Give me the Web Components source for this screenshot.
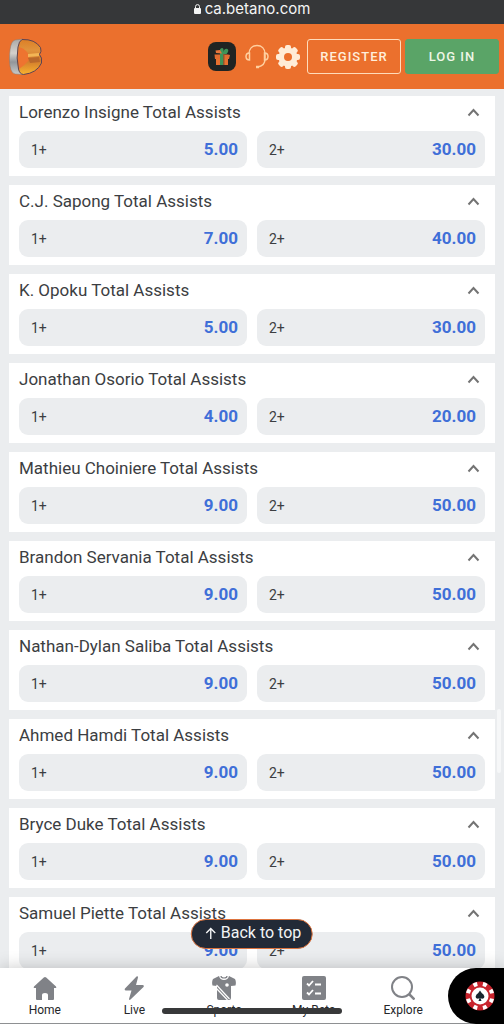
<!DOCTYPE html>
<html lang="en">
<head>
<meta charset="utf-8">
<meta name="viewport" content="width=device-width, initial-scale=1">
<title>Betano – Total Assists</title>
<style>
  html, body { margin: 0; height: 100%; }
  body { font-family: Roboto, "Liberation Sans", sans-serif; color: #3c3e42; background: #ebedef; }
</style>
</head>
<body>
<bet-app></bet-app>

<template id="t-app">
  <style>
    :host { display: flex; flex-direction: column; height: 100vh; position: relative; overflow: hidden; background: #ebedef; }
    main { flex: 1; min-height: 0; overflow-y: auto; scrollbar-width: none; display: flex; flex-direction: column; gap: 9px; padding: 7px 9px 0; }
    market-card { flex: none; }
    .thumb { position: absolute; right: 3px; top: 709px; width: 4px; height: 64px; border-radius: 2px; background: #f6f7f8; }
    .indicator { position: absolute; left: 50%; bottom: 10px; width: 180px; height: 6px; margin-left: -90px; border-radius: 3px; background: #38393a; }
  </style>
  <address-bar>ca.betano.com</address-bar>
  <site-header></site-header>
  <main></main>
  <div class="thumb"></div>
  <back-to-top>Back to top</back-to-top>
  <tab-bar></tab-bar>
  <div class="indicator"></div>
</template>

<template id="t-address">
  <style>
    :host { display: flex; justify-content: center; align-items: center; gap: 4px; height: 18px; padding-bottom: 6px; background: #363739; color: #f4f4f4; font: 15px/18px Inter, "Liberation Sans", sans-serif; }
    svg { width: 7px; height: 10px; }
  </style>
  <svg viewBox="0 0 7 10" aria-hidden="true"><rect y="4" width="7" height="6" rx="1" fill="#f4f4f4"/><path d="M1.500 4.500V2.600a2 2 0 0 1 4 0v1.900" fill="none" stroke="#f4f4f4"/></svg>
  <span><slot></slot></span>
</template>

<template id="t-header">
  <style>
    :host { display: flex; align-items: center; height: 65px; padding: 0 5px 0 9px; background: #eb702d; }
    a { display: block; margin-right: auto; }
    svg { display: block; }
    button { font: 500 13px/20px Roboto, sans-serif; letter-spacing: 1px; color: #ffeeda; border-radius: 3px; padding: 0; margin: 0; height: 35px; width: 94px; background: none; border: 1px solid #ffdcba; }
    .login { background: #5aa467; border-color: #5aa467; margin-left: 4px; color: #eef6e6; }
    .icon { border: 0; width: auto; height: auto; }
    .gift { margin-right: 9px; }
    .help { margin-right: 7px; }
    .gear { margin-right: 7px; }
  </style>
  <a href="#" aria-label="Betano home">
    <svg width="34" height="38" viewBox="0 0 34 38">
      <defs>
        <linearGradient id="s" x2="0" y2="1"><stop stop-color="#aaa9a7"/><stop offset=".4" stop-color="#d4d1cc"/><stop offset=".65" stop-color="#92969a"/><stop offset="1" stop-color="#c9cac8"/></linearGradient>
        <linearGradient id="g" x2="0" y2="1"><stop stop-color="#dc7f26"/><stop offset=".3" stop-color="#e0933c"/><stop offset=".6" stop-color="#d07a2c"/><stop offset="1" stop-color="#f9b32f"/></linearGradient>
      </defs>
      <path d="M14 1 6 2Q2 3 1 12-.5 25 2 32q1 3 4 4l9 .5L10 30 9 15z" fill="url(#s)" stroke="#8b7a70" stroke-width=".5"/>
      <path d="M13 1.500Q26 1 31.500 9.500q1.500 4-1 7 3 3 2 8.500-4.500 10-18 11.500-4-.5-5-5.500Q7 20 9 9q1-6 4-7.500z" fill="url(#g)"/>
      <path d="M10 9q7 2 10 8v5q-4 5-10 9Q8 20 10 9z" fill="#ee7430"/>
      <path d="m19 16 11-1v3l-11 1z" fill="#f3b555"/>
      <path d="m19 20 11-1 1 5-10 1z" fill="#b9682a"/>
      <path d="M13 1.500Q26 1 31.500 9.500q1.500 4-1 7 3 3 2 8.500-4.500 10-18 11.500-4-.5-5-5.500Q7 20 9 9q1-6 4-7.500z" fill="none" stroke="#5d4352"/>
    </svg>
  </a>
  <button class="icon gift" aria-label="Offers">
    <svg width="28" height="29" viewBox="0 0 28 29"><rect width="28" height="29" rx="8" fill="#202423"/>
      <path d="M8 14h12v9H8z" fill="#e9702f"/><path d="M6.500 12.500H20l2 .5-1 4H7z" fill="#e26c30"/><path d="M12 12h3v11h-3z" fill="#3f9458"/><path d="M15 12h1.500v11H15z" fill="#8a5a30"/>
      <path d="M12 12q-1-6 2-6 2 0 1.500 4 1-4 4-3 2 1.500-1 5z" fill="#3f9458"/><path d="m7.500 8.500 4.500-.5 2 3.500-6-.5z" fill="#e8753b"/></svg>
  </button>
  <button class="icon help" aria-label="Support">
    <svg width="24" height="25" viewBox="0 0 24 25" fill="none" stroke="#ffcf9f" stroke-width="1.500"><path d="M4 10C4 4.500 7.500 1.500 12 1.500S20 4.500 20 10v5c0 4-2 7-7 8"/><path d="M4.500 9v7C2 16 1 14.500 1 12.500S2 9 4.500 9zM19.500 9v7c2.500 0 3.500-1.500 3.500-3.500S22 9 19.500 9z"/><path d="M11 23h3" stroke-width="2.500"/></svg>
  </button>
  <button class="icon gear" aria-label="Settings">
    <svg width="24" height="24" viewBox="0 0 24 24"><g fill="#ffecd7"><rect x="9" y="0" width="6" height="24" rx="2"/><rect x="9" y="0" width="6" height="24" rx="2" transform="rotate(45 12 12)"/><rect x="9" y="0" width="6" height="24" rx="2" transform="rotate(90 12 12)"/><rect x="9" y="0" width="6" height="24" rx="2" transform="rotate(135 12 12)"/><circle cx="12" cy="12" r="9.500"/></g><circle cx="12" cy="12" r="4" fill="#eb702d"/></svg>
  </button>
  <button>REGISTER</button>
  <button class="login">LOG IN</button>
</template>

<template id="t-card">
  <style>
    :host { display: block; background: #fff; padding: 0 10px 8px; }
    header { display: flex; align-items: center; justify-content: space-between; height: 35px; padding-right: 5px; }
    h2 { margin: 0; padding-bottom: 4px; font-size: 17px; line-height: 20px; font-weight: 400; }
    .fold { border: 0; background: none; padding: 0 0 2px; display: block; }
    svg { display: block; }
    .row { display: grid; grid-template-columns: 1fr 1fr; gap: 10px; }
  </style>
  <header><h2><slot></slot></h2>
    <button class="fold" aria-label="Collapse"><svg width="13" height="9" viewBox="0 0 13 9"><path d="m1.500 7.500 5-5.500 5 5.500" fill="none" stroke="#747474" stroke-width="2"/></svg></button>
  </header>
  <div class="row"></div>
</template>

<template id="t-odd">
  <style>
    :host { display: block; }
    button { width: 100%; height: 37px; border: 0; border-radius: 9px; background: #ebedef; padding: 0 9px 0 12px; display: flex; align-items: center; justify-content: space-between; font: 14px/20px Roboto, sans-serif; color: #3c3e42; }
    b { font-size: 17px; line-height: 20px; font-weight: 700; color: #3f6fd8; padding-bottom: 2px; }
  </style>
  <button><span><slot></slot></span><b><slot name="price"></slot></b></button>
</template>

<template id="t-top">
  <style>
    :host { position: absolute; left: 50%; bottom: 75px; transform: translateX(-50%); }
    button { display: flex; align-items: center; gap: 4px; height: 30px; padding: 0 11px 2px 13px; border: 1px solid #dd743f; border-radius: 15px; background: #222a37; color: #f3f4f5; font: 16px/20px Roboto, sans-serif; white-space: nowrap; }
  </style>
  <button><svg width="12" height="12" viewBox="0 0 11 12" aria-hidden="true"><path d="M5.500 12V1.500M1 6l4.500-4.500L10 6" fill="none" stroke="#f3f4f5" stroke-width="1.400"/></svg><span><slot></slot></span></button>
</template>

<template id="t-tabs">
  <style>
    :host { display: flex; height: 56px; box-sizing: border-box; background: linear-gradient(#8e9092, #8e9092) bottom / 100% 1px no-repeat #fff; box-shadow: 0 0 16px rgba(0, 0, 0, .22); position: relative; }
    nav { flex: 1; display: grid; grid-template-columns: repeat(5, 1fr); }
    a { display: flex; flex-direction: column; align-items: center; gap: 2px; padding-top: 8px; color: #25272a; text-decoration: none; font-size: 12px; line-height: 16px; }
    svg { display: block; }
    .casino { border: 0; padding: 0 0 0 8px; width: 56px; background: #000; border-radius: 28px 0 0 28px; display: grid; place-items: center; }
  </style>
  <nav>
    <a href="#home"><svg width="24" height="24" viewBox="0 0 24 24" fill="#808287"><path d="M10.800 1.500a2 2 0 0 1 2.400 0L23 10.500q1 1.500-.5 1.500H21v11q0 1-1 1h-5v-5q0-2-3-2t-3 2v5H4q-1 0-1-1V12H1.500Q0 12 1 10.500z"/></svg>Home</a>
    <a href="#live"><svg width="24" height="24" viewBox="0 0 24 24" fill="#808287"><path d="M14.500.500 3 12.500q-1 2 1 2h5.500L7 23q0 1.500 1.500.5L21.500 11q1-2-1-2H14l2-7.500q0-2-1.500-1z"/></svg>Live</a>
    <a href="#sports"><svg width="24" height="24" viewBox="0 0 24 24"><path d="M7 0 1 3q-1.500 3-.5 6.500L5 10v12q0 2 2 2h10q2 0 2-2V10l4.500-.5Q24.500 6 23 3l-6-3q-1 4-5 4T7 0z" fill="#808287"/><path d="M9 0q0 2 3 2t3-2" fill="none" stroke="#808287" stroke-width="1.200"/><path d="m4.500 9 13 14M4.500 12.500l11 11.500" fill="none" stroke="#fff" stroke-width="1.200"/><circle cx="15" cy="9" r="1.800" fill="#fff"/></svg>Sports</a>
    <a href="#bets"><svg width="24" height="24" viewBox="0 0 24 24"><rect width="24" height="24" rx="2" fill="#808287"/><path d="m5 7.500 2 2 4-4.500m2 3.500h6M5 16.500l2 2 4-4.500m2 3.500h6" fill="none" stroke="#fff" stroke-width="1.800"/></svg>My Bets</a>
    <a href="#explore"><svg width="24" height="24" viewBox="0 0 24 24" fill="none" stroke="#808287" stroke-width="2"><circle cx="11" cy="11" r="10"/><path d="m18 18 5.500 5.500" stroke-width="2.500"/></svg>Explore</a>
  </nav>
  <button class="casino" aria-label="Casino"><svg width="30" height="30" viewBox="0 0 30 30"><circle cx="15" cy="15" r="14.500" fill="#c8232c"/><circle cx="15" cy="15" r="12.300" fill="none" stroke="#fff" stroke-width="4" stroke-dasharray="4 5.660" transform="rotate(12 15 15)"/><circle cx="15" cy="15" r="8.500" fill="#fff"/><path d="M15 9.500q1 2 3.500 4 1.500 2 .5 3.500-2 1.500-3.500 0l1 3h-3l1-3q-1.500 1.500-3.500 0-1-1.500.5-3.500 2.500-2 3.500-4z" fill="#17262e"/></svg></button>
</template>

<script>
  const base = id => class extends HTMLElement {
    constructor() {
      super();
      this.attachShadow({ mode: "open" }).append(document.getElementById(id).content.cloneNode(true));
    }
  };
  customElements.define("address-bar", class extends base("t-address") {});
  customElements.define("site-header", class extends base("t-header") {});
  customElements.define("odd-button", class extends base("t-odd") {});
  customElements.define("back-to-top", class extends base("t-top") {});
  customElements.define("tab-bar", class extends base("t-tabs") {});

  customElements.define("market-card", class extends base("t-card") {
    set prices(list) {
      this.shadowRoot.querySelector(".row").replaceChildren(...list.map((price, i) => {
        const odd = document.createElement("odd-button");
        const value = document.createElement("span");
        value.slot = "price";
        value.textContent = price;
        odd.append(`${i + 1}+`, value);
        return odd;
      }));
    }
  });

  const markets = [
    ["Lorenzo Insigne", "5.00", "30.00"],
    ["C.J. Sapong", "7.00", "40.00"],
    ["K. Opoku", "5.00", "30.00"],
    ["Jonathan Osorio", "4.00", "20.00"],
    ["Mathieu Choiniere", "9.00", "50.00"],
    ["Brandon Servania", "9.00", "50.00"],
    ["Nathan-Dylan Saliba", "9.00", "50.00"],
    ["Ahmed Hamdi", "9.00", "50.00"],
    ["Bryce Duke", "9.00", "50.00"],
    ["Samuel Piette", "9.00", "50.00"]
  ];

  customElements.define("bet-app", class extends base("t-app") {
    connectedCallback() {
      this.shadowRoot.querySelector("main").replaceChildren(...markets.map(([player, ...prices]) => {
        const card = document.createElement("market-card");
        card.textContent = `${player} Total Assists`;
        card.prices = prices;
        return card;
      }));
    }
  });
</script>
</body>
</html>
